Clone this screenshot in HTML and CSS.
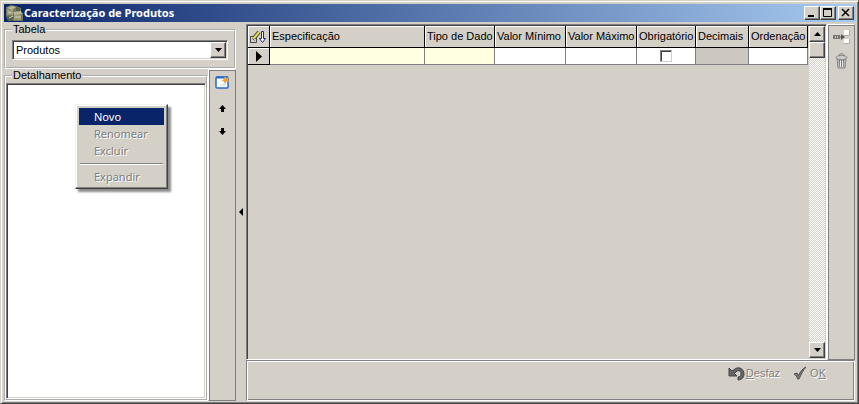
FILE: index.html
```html
<!DOCTYPE html>
<html lang="pt-BR">
<head>
<meta charset="utf-8">
<title>Caracterização de Produtos</title>
<link rel="stylesheet" href="styles.css">
</head>
<body>
<div class="window">
  <header class="titlebar">
    <svg class="app-icon" width="18" height="18" viewBox="0 0 18 18" aria-hidden="true">
      <path d="M1 3l5-2 5 1 5 2v4l2 1v8H3l-2-5z" fill="#74775f"/>
      <path d="M2 4l5-2 4 1-4 3zM8 8l8-1 1 3-7 2z" fill="#b9b894"/>
      <path d="M2 5l6 1v5H2zM9 11l7-1v6H9z" fill="#9a9a78"/>
      <path d="M11 3l4 1v3h-4zM2 12l6 1v4H3z" fill="#57604c"/>
      <path d="M3 8l4 1M10 13h6M4 14l4-2" stroke="#d6d2ae" fill="none"/>
    </svg>
    <h1>Caracterização de Produtos</h1>
    <div class="window-buttons">
      <button class="btn3d" aria-label="Minimizar"><svg width="12" height="10"><path d="M2 8h6" stroke="#000" stroke-width="2"/></svg></button>
      <button class="btn3d" aria-label="Maximizar"><svg width="12" height="10"><path d="M1.500 1v7.500h8V1" fill="none" stroke="#000"/><path d="M1 1h9" stroke="#000" stroke-width="2"/></svg></button>
      <button class="btn3d close" aria-label="Fechar"><svg width="12" height="10"><path d="M2 1l7 7M9 1L2 8" stroke="#000" stroke-width="1.500"/></svg></button>
    </div>
  </header>

  <main class="content">
    <aside class="sidebar">
      <fieldset class="group">
        <legend><label for="tabela">Tabela</label></legend>
        <div class="combo">
          <select id="tabela"><option>Produtos</option></select>
          <span class="btn3d combo-arrow" aria-hidden="true"><svg width="7" height="4"><path d="M0 0h7L3.500 4z"/></svg></span>
        </div>
      </fieldset>
      <div class="detail">
        <fieldset class="group detail-group">
          <legend>Detalhamento</legend>
          <div class="tree">
            <div class="menu" role="menu">
              <button class="active" role="menuitem">Novo</button>
              <button role="menuitem" disabled>Renomear</button>
              <button role="menuitem" disabled>Excluir</button>
              <hr>
              <button role="menuitem" disabled>Expandir</button>
            </div>
          </div>
        </fieldset>
        <div class="toolbar" role="toolbar">
          <button aria-label="Novo item"><svg width="15" height="13" viewBox="0 0 15 13"><rect x="1" y="1" width="12" height="11" rx="1" fill="#fff" stroke="#2868c8" stroke-width="1.500"/><path d="M1 1.500h12" stroke="#2868c8" stroke-width="2"/><path d="M3 10h8V6z" fill="#dceafa"/><path d="M10 0l1.500 2L14 1l-1 2.500L14 6l-2.500-.5L10 8l-1-2.500L6.500 5 9 3z" fill="#eba33a"/></svg></button>
          <button aria-label="Mover para cima"><svg width="7" height="7"><path d="M3.500 0L7 4H5v3H2V4H0z"/></svg></button>
          <button aria-label="Mover para baixo"><svg width="7" height="7"><path d="M3.500 7L7 3H5V0H2v3H0z"/></svg></button>
        </div>
      </div>
    </aside>

    <button class="splitter" aria-label="Recolher painel"><svg width="4" height="8"><path d="M4 0v8L0 4z"/></svg></button>

    <section class="workspace">
      <div class="upper">
        <div class="grid">
          <div class="grid-body">
            <table>
              <colgroup><col class="c-mark"><col class="c-spec"><col class="c-type"><col class="c-value"><col class="c-value"><col class="c-req"><col class="c-dec"><col class="c-ord"></colgroup>
              <thead>
                <tr>
                  <th><svg width="18" height="16" viewBox="0 0 18 16" aria-hidden="true"><path d="M1.500 7.500h6v6h-6z" fill="#d4d0c8" stroke="#444"/><path d="M3.500 9.500l2 2" stroke="#444"/><path d="M5 9l5-6" stroke="#444" stroke-width="4"/><path d="M5 9l5-6" stroke="#e8df45" stroke-width="2"/><path d="M12.500 2.500h2v7h2l-3 4-3-4h2z" fill="#fff" stroke="#25258c"/></svg></th>
                  <th>Especificação</th><th>Tipo de Dado</th><th>Valor Mínimo</th><th>Valor Máximo</th><th>Obrigatório</th><th>Decimais</th><th>Ordenação</th>
                </tr>
              </thead>
              <tbody>
                <tr>
                  <td class="mark"><svg width="6" height="11"><path d="M0 0l6 5.500L0 11z"/></svg></td>
                  <td class="required"></td><td class="required"></td><td></td><td></td>
                  <td class="check"><input type="checkbox" aria-label="Obrigatório"></td>
                  <td class="locked"></td><td></td>
                </tr>
              </tbody>
            </table>
          </div>
          <div class="scrollbar">
            <button class="btn3d" aria-label="Rolar para cima"><svg width="7" height="4"><path d="M0 4h7L3.500 0z"/></svg></button>
            <div class="btn3d thumb"></div>
            <button class="btn3d scroll-down" aria-label="Rolar para baixo"><svg width="7" height="4"><path d="M0 0h7L3.500 4z"/></svg></button>
          </div>
        </div>
        <div class="toolbar actions" role="toolbar">
          <button aria-label="Inserir linha"><svg width="17" height="14" viewBox="0 0 17 14"><path d="M11 0h5v5h-5zM11 9h5v5h-5z" fill="#fff"/><path d="M11 5.500h5.500V0M11 13.500h5.500V9" fill="none" stroke="#b0aca4"/><path d="M0 5h7v4H0z" fill="#777"/><path d="M2.500 6v2M4.500 6v2" stroke="#bbb"/><path d="M7 7h4" stroke="#555"/><path d="M8 4l4 3-4 3z" fill="#555"/></svg></button>
          <button aria-label="Excluir linha"><svg width="13" height="16" viewBox="0 0 13 16"><path d="M2 6h9l-1 9H3z" fill="#bbb" stroke="#888"/><ellipse cx="6.500" cy="4.500" rx="5.500" ry="2" fill="#ccc" stroke="#888"/><path d="M4 3c0-3 5-3 5 0M4.500 7l.5 7M6.500 7v7M8.500 7L8 14" fill="none" stroke="#777"/><path d="M5.500 8v6M7.500 8v6" stroke="#eee"/></svg></button>
        </div>
      </div>
      <footer class="footer">
        <button disabled><svg width="17" height="15" viewBox="0 0 17 15"><path d="M1 2v8h8L6.500 7.500 9 5c3-1 4 1 4 3s-1 3-3 3v3c4 0 6-3 6-6 0-5-5-8-9-5L4 5z" fill="#666" stroke="#444"/></svg><span><u>D</u>esfaz</span></button>
        <button class="ok" disabled><svg width="14" height="14" viewBox="0 0 14 14"><path d="M1 8l3-1 1.500 2.500C7 6 10 2 13 1 10 4 8 9 6 13H4.500C4 11 3 9 1 8z" fill="#777" stroke="#555"/></svg><span>O<u>K</u></span></button>
      </footer>
    </section>
  </main>
</div>
</body>
</html>
```
FILE: styles.css
```css
* { box-sizing: border-box; }
:root {
  --face: #d4d0c8;
  --shadow: #808080;
  --dark: #404040;
}
body {
  margin: 0;
  font: 11px/13px "Liberation Sans", Arial, sans-serif;
  color: #000;
}
button {
  margin: 0;
  padding: 0;
  border: 0;
  background: none;
  font: inherit;
  color: inherit;
}
svg { display: block; flex: none; }

.window {
  display: flex;
  flex-direction: column;
  height: 100vh;
  padding: 3px 2px 2px 3px;
  background: var(--face);
  border: 1px solid;
  border-color: var(--face) var(--dark) var(--dark) var(--face);
  box-shadow: inset 1px 1px #fff, inset -1px -1px var(--shadow);
}
.titlebar {
  display: flex;
  align-items: center;
  flex: none;
  height: 18px;
  padding: 0 2px 0 1px;
  gap: 1px;
  background: linear-gradient(to right, #0a246a, #a6caf0);
}
.titlebar h1 {
  flex: 1;
  margin: 0;
  font: bold 11px/18px "Noto Sans", sans-serif;
  color: #fff;
}
.window-buttons { display: flex; }
.btn3d {
  display: flex;
  align-items: center;
  justify-content: center;
  width: 16px;
  height: 14px;
  background: var(--face);
  border: 1px solid;
  border-color: #fff var(--dark) var(--dark) #fff;
  box-shadow: inset -1px -1px var(--shadow);
}
.close { margin-left: 2px; }

.content {
  display: flex;
  flex: 1;
  min-height: 0;
  padding-right: 1px;
}
.sidebar {
  display: flex;
  flex-direction: column;
  flex: none;
  width: 232px;
  padding-top: 1px;
}
.group {
  margin: 0;
  min-width: 0;
  padding: 4px 6px 7px;
  border: 2px groove #fff;
}
.group legend {
  padding: 0 1px;
  line-height: 13px;
}
.combo {
  display: flex;
  height: 20px;
  padding: 1px;
  background: #fff;
  border: 1px solid;
  border-color: var(--shadow) #fff #fff var(--shadow);
  box-shadow: inset 1px 1px var(--dark), inset -1px -1px var(--face);
  position: relative;
}
.combo select {
  flex: 1;
  padding: 0 2px;
  border: 0;
  background: none;
  appearance: none;
  font: inherit;
  color: #000;
}
.combo-arrow {
  position: absolute;
  top: 1px;
  right: 1px;
  height: 16px;
  pointer-events: none;
}
.detail {
  display: flex;
  flex: 1;
  min-height: 0;
}
.detail-group {
  display: flex;
  flex: 1;
  padding: 1px 0 0;
}
.detail-group legend { margin-left: 6px; }
.tree {
  position: relative;
  flex: 1;
  background: #fff;
  border: 1px solid;
  border-color: var(--shadow) #fff #fff var(--shadow);
  box-shadow: inset 1px 1px var(--dark), inset -1px -1px var(--face);
}
.menu {
  position: absolute;
  top: 20px;
  left: 68px;
  width: 93px;
  padding: 3px;
  background: var(--face);
  border: 1px solid;
  border-color: #f4f2ee var(--dark) var(--dark) #f4f2ee;
  box-shadow: inset -1px -1px var(--shadow), inset 1px 1px #fff, 3px 3px 2px rgba(0, 0, 0, .45);
  font: 11px/17px "Noto Sans", sans-serif;
}
.menu button {
  display: block;
  width: 100%;
  padding-left: 15px;
  text-align: left;
}
.menu .active { background: #0a246a; color: #fff; }
button:disabled { color: var(--shadow); text-shadow: 1px 1px #fff; }
.menu hr {
  margin: 4px 1px 3px;
  border: 0;
  border-top: 1px solid var(--shadow);
  border-bottom: 1px solid #fff;
}
.toolbar {
  display: flex;
  flex-direction: column;
  align-items: center;
  flex: none;
  width: 28px;
  padding-top: 6px;
  gap: 16px;
  border: 1px solid;
  border-color: #fff var(--shadow) var(--shadow) #fff;
  box-shadow: inset 1px 1px var(--shadow);
}
.splitter {
  display: flex;
  align-items: center;
  justify-content: center;
  flex: none;
  width: 10px;
}

.workspace {
  display: flex;
  flex-direction: column;
  flex: 1;
  min-width: 0;
  padding-top: 2px;
}
.upper { display: flex; flex: 1; min-height: 0; }
.grid {
  display: flex;
  flex: 1;
  min-width: 0;
  padding: 1px;
  border: 1px solid;
  border-color: var(--shadow) #fff #fff var(--shadow);
  box-shadow: inset 1px 1px var(--dark), inset -1px -1px var(--face);
}
.grid-body { flex: 1; min-width: 0; overflow: hidden; }
table {
  width: 560px;
  table-layout: fixed;
  border-collapse: separate;
  border-spacing: 0;
}
.c-mark { width: 22px; }
.c-spec { width: 155px; }
.c-type { width: 70px; }
.c-value { width: 71px; }
.c-req { width: 59px; }
.c-dec { width: 53px; }
.c-ord { width: 59px; }
th {
  height: 22px;
  padding: 0 0 0 2px;
  border-right: 1px solid #000;
  border-bottom: 1px solid #000;
  box-shadow: inset 1px 1px #fff;
  font-weight: normal;
  text-align: left;
  white-space: nowrap;
}
th:first-child { padding: 0 1px; }
td {
  height: 17px;
  padding: 0;
  background: #fff;
  border-right: 1px solid var(--shadow);
  border-bottom: 1px solid var(--shadow);
}
.mark {
  padding-left: 8px;
  background: var(--face);
  border-color: #000;
  box-shadow: inset 1px 1px #fff;
}
.required { background: #ffffe1; }
.locked { background: #ccc8c0; }
.check input {
  display: block;
  width: 12px;
  height: 12px;
  margin: 0 auto;
  appearance: none;
  border: 1px solid;
  border-color: var(--shadow) var(--face) var(--face) var(--shadow);
  box-shadow: inset 1px 1px var(--dark);
}
.scrollbar {
  display: flex;
  flex-direction: column;
  flex: none;
  width: 16px;
  background: repeating-conic-gradient(#fff 0 25%, var(--face) 0 50%) 0 0 / 2px 2px;
}
.scrollbar .btn3d { flex: none; height: 16px; }
.scroll-down { margin-top: auto; }
.actions { padding-top: 5px; gap: 9px; }
.footer {
  display: flex;
  justify-content: flex-end;
  align-items: flex-start;
  flex: none;
  gap: 13px;
  height: 41px;
  padding: 4px 28px 0 0;
  border: 1px solid;
  border-color: var(--shadow) #fff #fff var(--shadow);
  box-shadow: inset 1px 1px #fff, inset -1px -1px var(--shadow);
}
.footer button {
  display: flex;
  align-items: center;
  gap: 1px;
  height: 16px;
}
.footer .ok { gap: 3px; }
```
